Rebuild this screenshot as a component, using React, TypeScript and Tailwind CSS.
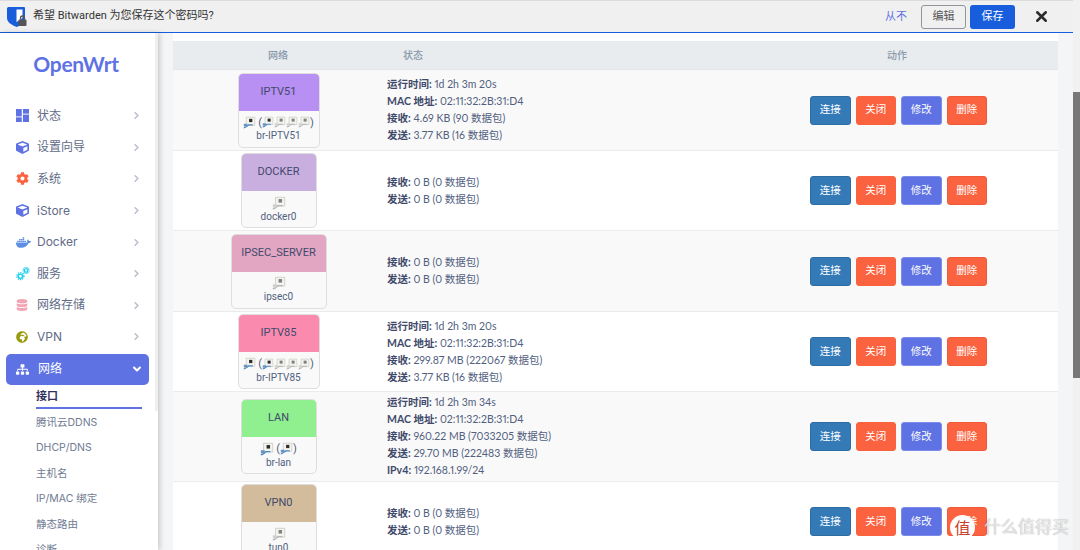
import { ChevronDown, ChevronRight, X } from 'lucide-react'
import { FaCog, FaCube, FaDatabase, FaDocker, FaGlobeAfrica, FaSitemap } from 'react-icons/fa'

function PanelsIcon() {
  return (
    <svg viewBox="0 0 14 14" className="w-[13px] h-[13px] text-[#5e72e4]" fill="currentColor">
      <rect x="0" y="0" width="6.2" height="8" />
      <rect x="0" y="9" width="6.2" height="5" />
      <rect x="7.5" y="0" width="6.5" height="5" />
      <rect x="7.5" y="6" width="6.5" height="8" />
    </svg>
  )
}

function ServiceIcon() {
  return (
    <svg viewBox="0 0 16 16" className="w-[14px] h-[14px] text-[#11cdef]" fill="none" stroke="currentColor">
      <circle cx="5" cy="10.5" r="2.4" strokeWidth="1.5" />
      <circle cx="5" cy="10.5" r="4" strokeWidth="1.5" strokeDasharray="1.4 1.2" />
      <circle cx="11.5" cy="4" r="2" strokeWidth="1.4" />
      <circle cx="11.5" cy="4" r="3.4" strokeWidth="1.4" strokeDasharray="1.3 1" />
    </svg>
  )
}

const menu = [
  { label: '状态', icon: <PanelsIcon /> },
  { label: '设置向导', icon: <FaCube className="w-[13px] h-[13px] text-[#5e72e4]" /> },
  { label: '系统', icon: <FaCog className="w-[13px] h-[13px] text-[#fb6340]" /> },
  { label: 'iStore', icon: <FaCube className="w-[13px] h-[13px] text-[#5e72e4]" /> },
  { label: 'Docker', icon: <FaDocker className="w-[15px] h-[15px] text-[#5e8fe4]" /> },
  { label: '服务', icon: <ServiceIcon /> },
  { label: '网络存储', icon: <FaDatabase className="w-[12px] h-[12px] text-[#f3a4b5]" /> },
  { label: 'VPN', icon: <FaGlobeAfrica className="w-[12px] h-[12px] text-[#9a9a10]" /> },
]

const subMenu = ['腾讯云DDNS', 'DHCP/DNS', '主机名', 'IP/MAC 绑定', '静态路由', '诊断']

type Row = {
  name: string
  device: string
  color: string
  width: string
  kind: 'bridge' | 'lan' | 'single'
  rowClass: string
  lines: [string, string][]
}

const rows: Row[] = [
  {
    name: 'IPTV51', device: 'br-IPTV51', color: 'bg-[#b88ff2]', width: 'w-[82px]', kind: 'bridge', rowClass: 'h-[81px] bg-[#f9f9f9]',
    lines: [['运行时间', '1d 2h 3m 20s'], ['MAC 地址', '02:11:32:2B:31:D4'], ['接收', '4.69 KB (90 数据包)'], ['发送', '3.77 KB (16 数据包)']],
  },
  {
    name: 'DOCKER', device: 'docker0', color: 'bg-[#c9aee0]', width: 'w-[76px]', kind: 'single', rowClass: 'h-[80px] bg-white',
    lines: [['接收', '0 B (0 数据包)'], ['发送', '0 B (0 数据包)']],
  },
  {
    name: 'IPSEC_SERVER', device: 'ipsec0', color: 'bg-[#e2a5c2]', width: 'w-[96px]', kind: 'single', rowClass: 'h-[81px] bg-[#f9f9f9]',
    lines: [['接收', '0 B (0 数据包)'], ['发送', '0 B (0 数据包)']],
  },
  {
    name: 'IPTV85', device: 'br-IPTV85', color: 'bg-[#fb8aaf]', width: 'w-[82px]', kind: 'bridge', rowClass: 'h-[80px] bg-white',
    lines: [['运行时间', '1d 2h 3m 20s'], ['MAC 地址', '02:11:32:2B:31:D4'], ['接收', '299.87 MB (222067 数据包)'], ['发送', '3.77 KB (16 数据包)']],
  },
  {
    name: 'LAN', device: 'br-lan', color: 'bg-[#90f090]', width: 'w-[76px]', kind: 'lan', rowClass: 'h-[90px] bg-[#f9f9f9]',
    lines: [['运行时间', '1d 2h 3m 34s'], ['MAC 地址', '02:11:32:2B:31:D4'], ['接收', '960.22 MB (7033205 数据包)'], ['发送', '29.70 MB (222483 数据包)'], ['IPv4', '192.168.1.99/24']],
  },
  {
    name: 'VPN0', device: 'tun0', color: 'bg-[#d3bc9c]', width: 'w-[76px]', kind: 'single', rowClass: 'h-[80px] bg-white',
    lines: [['接收', '0 B (0 数据包)'], ['发送', '0 B (0 数据包)']],
  },
]

const actions = [
  { label: '连接', color: 'bg-[#337ab7] border-[#2e6da4]' },
  { label: '关闭', color: 'bg-[#fb6340] border-[#fb6340]' },
  { label: '修改', color: 'bg-[#5e72e4] border-[#7c8cea]' },
  { label: '删除', color: 'bg-[#fb6340] border-[#ef5a38]' },
]

function BitwardenIcon() {
  return (
    <svg viewBox="0 0 20 20" className="w-[20px] h-[20px] shrink-0">
      <path d="M0 1.5A1.5 1.5 0 0 1 1.5 0H17a1 1 0 0 1 1 1v10c0 4-4 7-8 9-4-1.5-10-4-10-9z" fill="#175ddc" />
      <path d="M9.5 2.5h6V10c0 1.5-2 3-6 5z" fill="#fff" />
      <rect x="11.5" y="12.5" width="8" height="6.5" rx="1" fill="#555" />
      <path d="M13.5 12.5V11a2 2 0 0 1 4 0v1.5" fill="none" stroke="#555" strokeWidth="1.3" />
    </svg>
  )
}

// the small ethernet port picture OpenWrt shows per device
function PortIcon({ active, size }: { active?: boolean; size: string }) {
  return (
    <svg viewBox="0 0 16 16" className={`${size} shrink-0`}>
      <path d="M4 1.5h10.5v10H4z" fill="#f4f4ef" stroke="#c4c4ba" strokeWidth="0.8" />
      <rect x="7.5" y="3.5" width="4" height="4" fill={active ? '#2d2d2d' : '#808080'} />
      <path d="M1 14.5c3 0 4-2.5 6-3.5h5" fill="none" stroke={active ? '#4a8ac9' : '#b5b5b5'} strokeWidth="1.6" />
      <path d="M1 9.5h4.5V13H1z" fill={active ? '#6d93bb' : '#d0d0d0'} />
    </svg>
  )
}

function DeviceCard({ row }: { row: Row }) {
  return (
    <div className={`${row.width} rounded-[5px] border border-[#dedede] bg-[#f9f9f9] overflow-hidden flex flex-col shrink-0`}>
      <div className={`${row.color} h-[37px] flex items-center justify-center text-[11px] font-['Roboto','Noto_Sans_CJK_SC',sans-serif] text-[#3f4a6b]`}>
        {row.name}
      </div>
      <div className="h-[36px] flex flex-col items-center justify-center text-[10px] leading-[13px] text-[#525f7f] font-['Roboto','Noto_Sans_CJK_SC',sans-serif]">
        <div className="flex items-center h-[14px]">
          {row.kind === 'single' && <PortIcon size="w-[14px] h-[14px]" />}
          {row.kind === 'lan' && (
            <>
              <PortIcon active size="w-[14px] h-[14px]" />
              <span className="ml-[2px] text-[11px]">(</span>
              <PortIcon active size="w-[13px] h-[13px]" />
              <span className="text-[11px]">)</span>
            </>
          )}
          {row.kind === 'bridge' && (
            <>
              <PortIcon active size="w-[13px] h-[13px]" />
              <span className="ml-[2px] text-[11px]">(</span>
              <PortIcon active size="w-[12px] h-[12px]" />
              <PortIcon size="w-[12px] h-[12px]" />
              <PortIcon size="w-[12px] h-[12px]" />
              <PortIcon size="w-[12px] h-[12px]" />
              <span className="text-[11px]">)</span>
            </>
          )}
        </div>
        <div>{row.device}</div>
      </div>
    </div>
  )
}

export default function App() {
  return (
    <div className="relative w-[1080px] h-[550px] overflow-hidden flex bg-[#f4f5f7] text-[#525f7f] font-['Inter','Noto_Sans_CJK_SC',sans-serif]">
      <div className="w-[1073px] flex flex-col">
        {/* bitwarden save bar */}
        <div className="h-[33px] shrink-0 flex items-center bg-[#f0f0f0] border-t border-t-[#dcdcdc] border-b border-b-[#175ddc] pl-[7px] pr-[23px]">
          <BitwardenIcon />
          <span className="ml-[6px] text-[11px] text-[#333] font-['Roboto','Noto_Sans_CJK_SC',sans-serif]">希望 Bitwarden 为您保存这个密码吗?</span>
          <span className="ml-auto text-[11px] text-[#5e72e4]">从不</span>
          <button className="ml-[14px] w-[45px] h-[24px] rounded-[3px] border border-[#8f959b] text-[11px] text-[#555]">编辑</button>
          <button className="ml-[4px] w-[45px] h-[24px] rounded-[3px] bg-[#175ddc] text-[11px] text-white">保存</button>
          <X className="ml-[18px] w-[17px] h-[17px] text-[#2b2b2b]" strokeWidth={3.5} />
        </div>

        <div className="flex-1 flex min-h-0">
          {/* sidebar */}
          <aside className="w-[158px] shrink-0 bg-white shadow-[2px_0_5px_rgba(0,0,0,0.18)] flex z-10">
            <div className="w-[155px] shrink-0">
              <div className="h-[65px] flex items-center justify-center pb-[3px] pr-[3px] text-[21px] font-bold tracking-[-0.3px] text-[#5e72e4] font-['Lato',sans-serif]">
                OpenWrt
              </div>
              <div className="flex flex-col pt-[2px]">
                {menu.map((item) => (
                  <div key={item.label} className="h-[31.6px] flex items-center pl-[16px] pr-[13px] text-[12px] text-[#5f6b87]">
                    <span className="w-[21px] flex items-center">{item.icon}</span>
                    <span>{item.label}</span>
                    <ChevronRight className="ml-auto w-[11px] h-[11px] text-[#bcc0ca]" strokeWidth={3.5} />
                  </div>
                ))}
              </div>
              <div className="ml-[6px] mt-[1px] w-[143px] h-[31px] rounded-[5px] bg-[#5e72e4] flex items-center pl-[10px] pr-[6px] text-[12px] text-white">
                <FaSitemap className="w-[13px] h-[13px] mr-[9px]" />
                <span>网络</span>
                <ChevronDown className="ml-auto w-[12px] h-[12px]" strokeWidth={4} />
              </div>
              <div className="pl-[36px] pr-[13px] text-[10.5px] text-[#6f7a93]">
                <div className="h-[24px] flex items-center border-b-2 border-[#5e72e4] text-[11px] font-semibold text-[#32325d]">接口</div>
                {subMenu.map((item) => (
                  <div key={item} className="h-[25.5px] flex items-center pt-[2px]">{item}</div>
                ))}
              </div>
            </div>
            <div className="w-[3px] h-[378px] bg-[#efefef]" />
          </aside>

          {/* main content */}
          <main className="flex-1 min-w-0 pl-[15px] pr-[15px]">
            <div className="bg-white pt-[8px]">
              <div className="h-[29px] flex items-center bg-[#e9ecef] border-b border-[#e3e5e8] text-[10px] font-medium text-[#8898aa]">
                <div className="w-[210px] text-center">网络</div>
                <div className="w-[353px] pl-[20px]">状态</div>
                <div className="flex-1 text-center">动作</div>
              </div>
              {rows.map((row) => (
                <div key={row.name} className={`${row.rowClass} flex items-center border-b border-[#e9ecef]`}>
                  <div className="w-[210px] flex justify-center pl-[1px]">
                    <DeviceCard row={row} />
                  </div>
                  <div className="w-[427px] pl-[4px] text-[10.5px] leading-[17px] proportional-nums text-[#525f7f] font-['Lato','Noto_Sans_CJK_SC',sans-serif]">
                    {row.lines.map(([label, value]) => (
                      <div key={label}>
                        <span className="font-bold text-[#3f4a6b]">{label}:</span> {value}
                      </div>
                    ))}
                  </div>
                  <div className="flex gap-[5px]">
                    {actions.map((a) => (
                      <button key={a.label} className={`${a.color} w-[40.5px] h-[29px] rounded-[3px] border text-[10.5px] text-white`}>
                        {a.label}
                      </button>
                    ))}
                  </div>
                </div>
              ))}
            </div>
          </main>
        </div>
      </div>

      {/* page scrollbar */}
      <div className="w-[7px] bg-[#f1f1f1] pt-[92px]">
        <div className="h-[286px] bg-[#787878]" />
      </div>

      {/* site watermark */}
      <div className="absolute left-[950px] top-[515px] flex items-center">
        <div className="w-[25px] h-[25px] rounded-full bg-white flex items-center justify-center text-[16px] text-[#c9402c]">值</div>
        <span className="ml-[9px] text-[17px] text-white/75 [text-shadow:0_0_1px_rgba(0,0,0,0.45)]">什么值得买</span>
      </div>
    </div>
  )
}
